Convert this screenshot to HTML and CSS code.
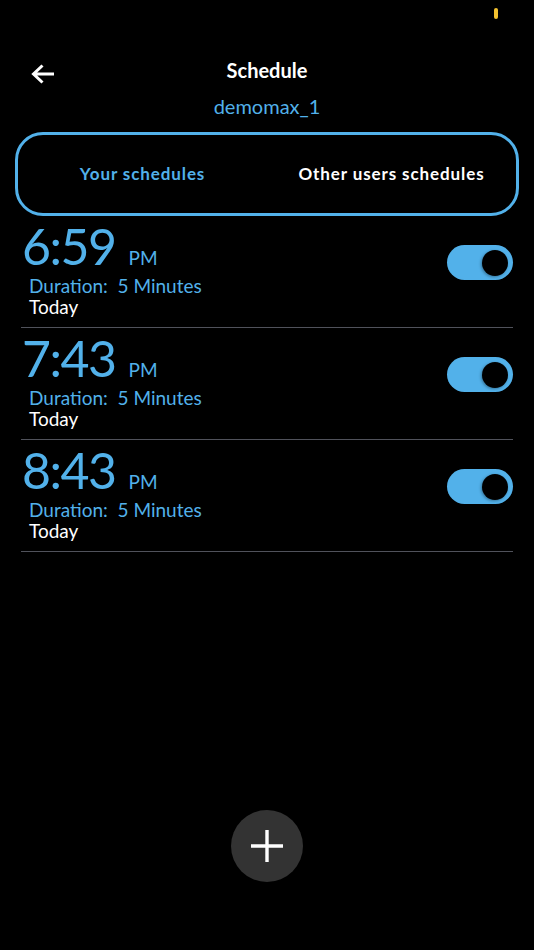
FILE: index.html
```html
<!DOCTYPE html>
<html>
<head>
<meta charset="utf-8">
<link rel="stylesheet" href="styles.css">
</head>
<body>
<div class="screen">
  <div class="statusbar"><span class="dot"></span></div>
  <header class="header">
    <button class="back" aria-label="Back">
      <svg width="26" height="22" viewBox="0 0 26 22"><path d="M24 11H4M12.5 2.5L3.5 11l9 8.5" fill="none" stroke="#fff" stroke-width="3" stroke-linecap="butt" stroke-linejoin="miter"/></svg>
    </button>
    <div class="titles">
      <div class="title">Schedule</div>
      <div class="subtitle">demomax_1</div>
    </div>
  </header>
  <nav class="tabs">
    <div class="tab active">Your schedules</div>
    <div class="tab">Other users schedules</div>
  </nav>
  <ul class="list">
    <li class="row">
      <div class="info">
        <div class="time"><span class="hm">6:59</span><span class="ampm">PM</span></div>
        <div class="duration">Duration:&nbsp; 5 Minutes</div>
        <div class="day">Today</div>
      </div>
      <div class="toggle"><span class="knob"></span></div>
    </li>
    <li class="row">
      <div class="info">
        <div class="time"><span class="hm">7:43</span><span class="ampm">PM</span></div>
        <div class="duration">Duration:&nbsp; 5 Minutes</div>
        <div class="day">Today</div>
      </div>
      <div class="toggle"><span class="knob"></span></div>
    </li>
    <li class="row">
      <div class="info">
        <div class="time"><span class="hm">8:43</span><span class="ampm">PM</span></div>
        <div class="duration">Duration:&nbsp; 5 Minutes</div>
        <div class="day">Today</div>
      </div>
      <div class="toggle"><span class="knob"></span></div>
    </li>
  </ul>
  <button class="fab" aria-label="Add">
    <svg width="34" height="34" viewBox="0 0 34 34"><path d="M17 1v32M1 17h32" stroke="#fff" stroke-width="3.4"/></svg>
  </button>
</div>
</body>
</html>
```
FILE: styles.css
```css
* { box-sizing: border-box; }
html, body { margin: 0; padding: 0; background: #000; }
body { font-family: Lato, "Open Sans", sans-serif; color: #fff; }
.screen { position: relative; width: 534px; height: 950px; background: #000; overflow: hidden; }
.statusbar { height: 30px; display: flex; justify-content: flex-end; padding: 8px 36px 0 0; }
.dot { width: 4px; height: 11px; border-radius: 2px; background: #f3c12f; }
.header { display: grid; grid-template-columns: 70px 1fr 70px; align-items: start; padding-top: 28px; height: 102px; }
.back { grid-column: 1; background: none; border: 0; padding: 0; margin: 5px 0 0 30px; width: 26px; height: 22px; display: block; }
.back svg { display: block; }
.titles { grid-column: 2; display: flex; flex-direction: column; align-items: center; }
.title { font-weight: 700; font-size: 20px; line-height: 24px; color: #fff; }
.subtitle { font-size: 20px; line-height: 24px; margin-top: 12px; color: #52b1ea; }
.tabs { margin: 0 15px; height: 84px; border: 3px solid #52b1ea; border-radius: 28px; display: grid; grid-template-columns: 1fr 1fr; align-items: center; }
.tab { font-weight: 700; font-size: 17px; letter-spacing: 0.9px; text-align: center; color: #fff; margin-top: -2px; }
.tab.active { color: #52b1ea; padding-left: 0; }
.tab:not(.active) { padding-left: 0; }
.list { list-style: none; margin: 0; padding: 0 21px 0 21px; }
.row { height: 112px; padding-top: 5px; border-bottom: 1.5px solid #50525b; display: flex; justify-content: space-between; align-items: flex-start; }
.info { display: flex; flex-direction: column; }
.time { display: flex; align-items: baseline; color: #52b1ea; height: 54px; }
.hm { font-size: 50px; line-height: 50px; letter-spacing: -1.5px; margin-left: 1px; }
.ampm { font-size: 19px; margin-left: 13px; }
.duration { color: #52b1ea; font-size: 19px; line-height: 21px; margin-left: 8px; }
.day { font-size: 19px; line-height: 21px; margin-left: 8px; }
.toggle { width: 66px; height: 35px; margin-top: 24px; margin-right: 0; border-radius: 18px; background: #52b1ea; display: flex; align-items: center; justify-content: flex-end; padding-right: 5px; }
.knob { width: 26px; height: 26px; border-radius: 50%; background: #000; box-shadow: -1px 1px 3px rgba(0,0,0,0.35); }
.fab { position: absolute; left: 231px; top: 810px; width: 72px; height: 72px; border-radius: 50%; border: 0; background: #333; display: flex; align-items: center; justify-content: center; padding: 0; }
```
